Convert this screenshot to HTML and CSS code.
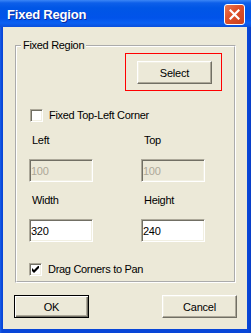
FILE: index.html
```html
<!DOCTYPE html>
<html lang="en">

<head>
    <meta charset="UTF-8" />
    <title>Fixed Region</title>
    <link rel="stylesheet" href="styles.css">
</head>

<body>
    <div class="dialog">
        <div class="titlebar">
            <span class="title">Fixed Region</span>
            <span class="close">
                <svg width="11" height="11" viewBox="0 0 11 11">
                    <path d="M1.5 1.5 L9.5 9.5 M9.5 1.5 L1.5 9.5" stroke="#fff" stroke-width="2.2" stroke-linecap="square" />
                </svg>
            </span>
        </div>
        <div class="client">
            <fieldset class="group">
                <legend>Fixed Region</legend>
                <div class="select-row">
                    <div class="highlight">
                        <button type="button" class="btn">Select</button>
                    </div>
                </div>
                <label class="check check-top"><span class="box"></span>Fixed Top-Left Corner</label>
                <div class="fields">
                    <div class="field">
                        <span class="cap">Left</span>
                        <input class="edit" type="text" value="100" disabled />
                    </div>
                    <div class="field">
                        <span class="cap">Top</span>
                        <input class="edit" type="text" value="100" disabled />
                    </div>
                    <div class="field">
                        <span class="cap">Width</span>
                        <input class="edit" type="text" value="320" />
                    </div>
                    <div class="field">
                        <span class="cap">Height</span>
                        <input class="edit" type="text" value="240" />
                    </div>
                </div>
                <label class="check check-bottom">
                    <span class="box">
                        <svg width="7" height="7" viewBox="0 0 7 7">
                            <path d="M0 2 L0 5 L2 7 L7 2 L7 -1 L2 4 Z" fill="#000" />
                        </svg>
                    </span>Drag Corners to Pan</label>
            </fieldset>
            <div class="actions">
                <button type="button" class="btn btn-default">OK</button>
                <button type="button" class="btn">Cancel</button>
            </div>
        </div>
    </div>
</body>

</html>
```

FILE: styles.css
```css
body {
    margin: 0;
    font-family: "Liberation Sans", Arial, sans-serif;
    font-size: 11px;
    letter-spacing: -0.3px;
    color: #000;
}

.dialog {
    width: 251px;
    height: 333px;
    display: flex;
    flex-direction: column;
    background: linear-gradient(to right, #1a5ee8 0, #0846d8 2px, #0846d8 248px, #0a3fc6 251px);
}

.titlebar {
    height: 27px;
    box-sizing: border-box;
    display: flex;
    align-items: flex-start;
    justify-content: space-between;
    padding: 0 6px 0 7px;
    background: linear-gradient(to bottom, #3b86f6 0, #0d5fe9 3px, #0056e6 8px, #0153ea 18px, #0a60f2 23px, #0a4fdc 27px);
}

.title {
    margin-top: 7px;
    font-weight: bold;
    font-size: 13px;
    line-height: 16px;
    letter-spacing: -0.2px;
    color: #fff;
    text-shadow: 1px 1px #0b2a9c;
}

.close {
    width: 21px;
    height: 21px;
    margin-top: 4px;
    box-sizing: border-box;
    border: 1px solid #fff;
    border-radius: 3px;
    background: linear-gradient(135deg, #ea7a55 0, #e0522b 40%, #c9401d 100%);
    display: flex;
    align-items: center;
    justify-content: center;
}

.client {
    flex: 1;
    margin: 0 4px 4px 3px;
    background-color: #ece9d8;
    display: flex;
    flex-direction: column;
}

/* group box */

.group {
    width: 221px;
    box-sizing: border-box;
    margin: 12px 0 0 12px;
    padding: 0 0 5px 0;
    border: 2px groove #fff;
}

.group legend {
    margin-left: 4px;
    padding: 0 2px 2px 2px;
    line-height: 12px;
}

.select-row {
    display: flex;
    justify-content: flex-end;
    padding-right: 12px;
}

.highlight {
    border: 1px solid #ff0000;
    padding: 7px 9px 6px 11px;
}

.check {
    display: flex;
    align-items: center;
    height: 13px;
    line-height: 13px;
}

.check-top {
    margin: 18px 0 0 13px;
}

.check-bottom {
    margin: 21px 0 0 12px;
}

.box {
    width: 13px;
    height: 13px;
    box-sizing: border-box;
    margin-right: 6px;
    background-color: #fff;
    border: 1px solid;
    border-color: #aca899 #fff #fff #aca899;
    box-shadow: inset 1px 1px #716f64, inset -1px -1px #f1efe2;
    display: flex;
    align-items: center;
    justify-content: center;
}

.fields {
    display: grid;
    grid-template-columns: 64px 64px;
    column-gap: 48px;
    row-gap: 12px;
    margin: 12px 0 0 12px;
}

.field {
    display: flex;
    flex-direction: column;
}

.cap {
    line-height: 13px;
    padding-left: 3px;
    margin-bottom: 12px;
}

.edit {
    width: 64px;
    height: 23px;
    box-sizing: border-box;
    margin: 0;
    padding: 0 1px;
    font-family: "Liberation Sans", Arial, sans-serif;
    font-size: 11px;
    letter-spacing: -0.3px;
    color: #000;
    background-color: #fff;
    border: 1px solid;
    border-color: #aca899 #fff #fff #aca899;
    box-shadow: inset 1px 1px #716f64, inset -1px -1px #f1efe2;
    outline: none;
}

.edit:disabled {
    background-color: #ece9d8;
    color: #aca899;
    -webkit-text-fill-color: #aca899;
}

/* buttons */

.btn {
    width: 75px;
    height: 23px;
    box-sizing: border-box;
    margin: 0;
    padding: 0;
    font-family: "Liberation Sans", Arial, sans-serif;
    font-size: 11px;
    letter-spacing: -0.2px;
    color: #000;
    background-color: #ece9d8;
    border: 1px solid;
    border-color: #fff #716f64 #716f64 #fff;
    box-shadow: inset -1px -1px #aca899, inset 1px 1px #f1efe2;
    display: block;
}

.btn-default {
    border: 1px solid #000;
    box-shadow: inset 1px 1px #fff, inset -1px -1px #716f64, inset -2px -2px #aca899;
}

.actions {
    display: flex;
    justify-content: space-between;
    margin-top: 12px;
    padding: 0 10px 0 11px;
}
```
